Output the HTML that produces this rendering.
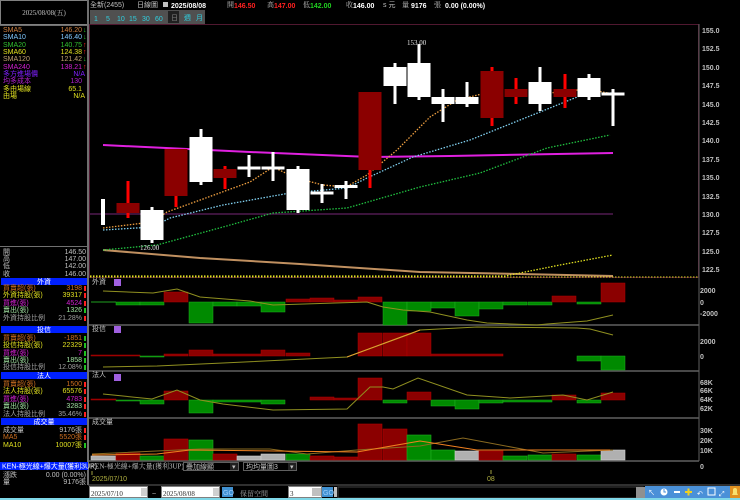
<!DOCTYPE html>
<html><head><meta charset="utf-8"><style>
html,body{margin:0;padding:0;background:#000;width:740px;height:500px;overflow:hidden}
svg{display:block}
text{font-family:"Liberation Sans","Noto Sans CJK TC",sans-serif;font-size:7px}
.s{font-family:"Liberation Serif","Noto Serif CJK SC",serif}
</style></head><body>
<svg width="740" height="500" viewBox="0 0 740 500" xmlns="http://www.w3.org/2000/svg">
<rect width="740" height="500" fill="#000"/>
<!-- left panel -->
<rect x="0.5" y="0.5" width="87" height="24" fill="none" stroke="#808080"/>
<line x1="88" y1="0" x2="88" y2="485" stroke="#707070" stroke-width="2"/>
<text x="44" y="15" fill="#c0c0c0" text-anchor="middle" class="s">2025/08/08(五)</text>
<line x1="0" y1="25.5" x2="88" y2="25.5" stroke="#707070"/>
<g class="s">
<text x="3" y="32" fill="#d08040">SMA5</text><text x="82" y="32" fill="#d08040" text-anchor="end">146.20</text><text x="83" y="32" fill="#20c020">↓</text>
<text x="3" y="39" fill="#80c8ff">SMA10</text><text x="82" y="39" fill="#80c8ff" text-anchor="end">146.40</text><text x="83" y="39" fill="#20c020">↓</text>
<text x="3" y="47" fill="#30c030">SMA20</text><text x="82" y="47" fill="#30c030" text-anchor="end">140.75</text><text x="83" y="47" fill="#ff2020">↑</text>
<text x="3" y="54" fill="#e0e020">SMA60</text><text x="82" y="54" fill="#e0e020" text-anchor="end">124.38</text><text x="83" y="54" fill="#ff2020">↑</text>
<text x="3" y="61" fill="#c0a070">SMA120</text><text x="82" y="61" fill="#c0a070" text-anchor="end">121.42</text><text x="83" y="61" fill="#20c020">↓</text>
<text x="3" y="69" fill="#d020d0">SMA240</text><text x="82" y="69" fill="#d020d0" text-anchor="end">138.21</text><text x="83" y="69" fill="#ff2020">↑</text>
<text x="3" y="76" fill="#8020ff">多方進場價</text><text x="85" y="76" fill="#8020ff" text-anchor="end">N/A</text>
<text x="3" y="83" fill="#b020d0">均多成本</text><text x="82" y="83" fill="#b020d0" text-anchor="end">130</text>
<text x="3" y="91" fill="#e0e020">多由場線</text><text x="82" y="91" fill="#e0e020" text-anchor="end">65.1</text>
<text x="3" y="98" fill="#e0e020">由場</text><text x="85" y="98" fill="#e0e020" text-anchor="end">N/A</text>

<line x1="0" y1="246.5" x2="88" y2="246.5" stroke="#707070"/>
<text x="3" y="254" fill="#c0c0c0">開</text><text x="86" y="254" fill="#c0c0c0" text-anchor="end">146.50</text>
<text x="3" y="261" fill="#c0c0c0">高</text><text x="86" y="261" fill="#c0c0c0" text-anchor="end">147.00</text>
<text x="3" y="268" fill="#c0c0c0">低</text><text x="86" y="268" fill="#c0c0c0" text-anchor="end">142.00</text>
<text x="3" y="276" fill="#c0c0c0">收</text><text x="86" y="276" fill="#c0c0c0" text-anchor="end">146.00</text>

<rect x="1" y="278" width="86" height="7" fill="#0020ff"/><text x="44" y="284" fill="#fff" text-anchor="middle">外資</text>
<text x="3" y="290" fill="#d07020">買賣超(張)</text><text x="82" y="290" fill="#d07020" text-anchor="end">3198</text><rect x="84" y="286" width="2" height="5" fill="#ff2020"/>
<text x="3" y="297" fill="#e0e020">外資持股(張)</text><text x="82" y="297" fill="#e0e020" text-anchor="end">39317</text><rect x="84" y="293" width="2" height="5" fill="#ff2020"/>
<text x="3" y="305" fill="#d020d0">買進(張)</text><text x="82" y="305" fill="#d020d0" text-anchor="end">4524</text><rect x="84" y="301" width="2" height="5" fill="#ff2020"/>
<text x="3" y="312" fill="#a0e0a0">賣出(張)</text><text x="82" y="312" fill="#a0e0a0" text-anchor="end">1326</text><rect x="84" y="308" width="2" height="5" fill="#20c020"/>
<text x="3" y="320" fill="#a0a0a0">外資持股比例</text><text x="82" y="320" fill="#a0a0a0" text-anchor="end">21.28%</text><rect x="84" y="316" width="2" height="5" fill="#ff2020"/>

<rect x="1" y="326" width="86" height="7" fill="#0020ff"/><text x="44" y="332" fill="#fff" text-anchor="middle">投信</text>
<text x="3" y="340" fill="#d07020">買賣超(張)</text><text x="82" y="340" fill="#d07020" text-anchor="end">-1851</text><rect x="84" y="336" width="2" height="5" fill="#20c020"/>
<text x="3" y="347" fill="#e0e020">投信持股(張)</text><text x="82" y="347" fill="#e0e020" text-anchor="end">22329</text><rect x="84" y="343" width="2" height="5" fill="#20c020"/>
<text x="3" y="355" fill="#d020d0">買進(張)</text><text x="82" y="355" fill="#d020d0" text-anchor="end">7</text><rect x="84" y="351" width="2" height="5" fill="#20c020"/>
<text x="3" y="362" fill="#a0e0a0">賣出(張)</text><text x="82" y="362" fill="#a0e0a0" text-anchor="end">1858</text><rect x="84" y="358" width="2" height="5" fill="#20c020"/>
<text x="3" y="369" fill="#a0a0a0">投信持股比例</text><text x="82" y="369" fill="#a0a0a0" text-anchor="end">12.08%</text><rect x="84" y="365" width="2" height="5" fill="#20c020"/>

<rect x="1" y="372" width="86" height="7" fill="#0020ff"/><text x="44" y="378" fill="#fff" text-anchor="middle">法人</text>
<text x="3" y="386" fill="#d07020">買賣超(張)</text><text x="82" y="386" fill="#d07020" text-anchor="end">1500</text><rect x="84" y="382" width="2" height="5" fill="#ff2020"/>
<text x="3" y="393" fill="#e0e020">法人持股(張)</text><text x="82" y="393" fill="#e0e020" text-anchor="end">65576</text><rect x="84" y="389" width="2" height="5" fill="#ff2020"/>
<text x="3" y="401" fill="#d020d0">買進(張)</text><text x="82" y="401" fill="#d020d0" text-anchor="end">4783</text><rect x="84" y="397" width="2" height="5" fill="#ff2020"/>
<text x="3" y="408" fill="#a0e0a0">賣出(張)</text><text x="82" y="408" fill="#a0e0a0" text-anchor="end">3283</text><rect x="84" y="404" width="2" height="5" fill="#ff2020"/>
<text x="3" y="416" fill="#a0a0a0">法人持股比例</text><text x="82" y="416" fill="#a0a0a0" text-anchor="end">35.46%</text><rect x="84" y="412" width="2" height="5" fill="#ff2020"/>

<rect x="1" y="418" width="86" height="7" fill="#0020ff"/><text x="44" y="424" fill="#fff" text-anchor="middle">成交量</text>
<text x="3" y="432" fill="#c0c0c0">成交量</text><text x="82" y="432" fill="#c0c0c0" text-anchor="end">9176張</text><rect x="84" y="428" width="2" height="5" fill="#ff2020"/>
<text x="3" y="439" fill="#d07020">MA5</text><text x="82" y="439" fill="#d07020" text-anchor="end">5520張</text><rect x="84" y="435" width="2" height="5" fill="#ff2020"/>
<text x="3" y="447" fill="#e0e020">MA10</text><text x="82" y="447" fill="#e0e020" text-anchor="end">10007張</text><rect x="84" y="443" width="2" height="5" fill="#20c020"/>

<rect x="0" y="462" width="88" height="8" fill="#0020ff"/><text x="2" y="468.5" fill="#fff" font-size="6.5">KEN-極光線+爆大量(獲利3UP)</text>
<text x="3" y="477" fill="#c0c0c0">漲跌</text><text x="86" y="477" fill="#c0c0c0" text-anchor="end">0.00 (0.00%)</text>
<text x="3" y="484" fill="#c0c0c0">量</text><text x="86" y="484" fill="#c0c0c0" text-anchor="end">9176張</text>
</g>

<!-- top header -->
<g class="s">
<text x="90" y="7" fill="#c0c0c0">全新(2455)</text>
<text x="137" y="7" fill="#c0c0c0">日線圖</text>
<rect x="163" y="2" width="5" height="5" fill="#c0c0c0"/>
</g>
<text x="171" y="8" fill="#fff" font-weight="bold" font-size="9">2025/08/08</text>
<text x="227" y="7" fill="#c0c0c0" class="s">開</text><text x="234" y="8" fill="#ff2020" font-weight="bold" font-size="8.5">146.50</text>
<text x="267" y="7" fill="#c0c0c0" class="s">高</text><text x="274" y="8" fill="#ff2020" font-weight="bold" font-size="8.5">147.00</text>
<text x="303" y="7" fill="#c0c0c0" class="s">低</text><text x="310" y="8" fill="#20d020" font-weight="bold" font-size="8.5">142.00</text>
<text x="346" y="7" fill="#c0c0c0" class="s">收</text><text x="353" y="8" fill="#fff" font-weight="bold" font-size="8.5">146.00</text>
<text x="383" y="7" fill="#c0c0c0">s 元</text>
<text x="402" y="7" fill="#c0c0c0" class="s">量</text><text x="411" y="8" fill="#fff" font-weight="bold" font-size="8.5">9176</text>
<text x="434" y="7" fill="#c0c0c0" class="s">張</text><text x="445" y="8" fill="#fff" font-weight="bold" font-size="8.5">0.00 (0.00%)</text>
<!-- buttons -->
<rect x="90" y="10" width="115" height="14" fill="#505050"/>
<g fill="#30d0e0" font-size="8.5">
<text x="94" y="21">1</text><text x="106" y="21">5</text><text x="117" y="21">10</text><text x="129" y="21">15</text><text x="142" y="21">30</text><text x="155" y="21">60</text>
</g>
<rect x="168" y="11" width="11" height="12" fill="#202020"/>
<text x="171" y="20" fill="#808080" font-size="6">日</text>
<text x="184" y="20" fill="#30d0e0" font-size="6">週</text><text x="196" y="20" fill="#30d0e0" font-size="6">月</text>

<!-- main chart frame -->
<rect x="89.5" y="24.5" width="609" height="253" fill="none" stroke="#501830"/>
<!-- axis labels -->
<g fill="#c0c0c0" font-size="7.5" font-weight="bold">
<text x="702" y="33">155.0</text><text x="702" y="51">152.5</text><text x="702" y="70">150.0</text><text x="702" y="88">147.5</text><text x="702" y="107">145.0</text><text x="702" y="125">142.5</text><text x="702" y="143">140.0</text><text x="702" y="162">137.5</text><text x="702" y="180">135.0</text><text x="702" y="199">132.5</text><text x="702" y="217">130.0</text><text x="702" y="235">127.5</text><text x="702" y="254">125.0</text><text x="702" y="272">122.5</text>
</g>
<!-- horizontal purple -->
<line x1="90" y1="214" x2="613" y2="214" stroke="#602060" stroke-width="1.2"/>
<!-- MA120 tan -->
<polyline points="103,250 200,258 300,264 420,272 520,274 613,276" fill="none" stroke="#c09060" stroke-width="2"/>
<!-- MA60 yellow dotted -->
<polyline points="90,276 505,276 560,265 613,255" fill="none" stroke="#e0e020" stroke-width="1.3" stroke-dasharray="1.5,1.5"/>
<line x1="90" y1="277" x2="699" y2="277" stroke="#e0e020" stroke-dasharray="1.5,1.5"/>
<!-- magenta -->
<polyline points="103,145 250,152 370,157 450,156 613,153" fill="none" stroke="#e020e0" stroke-width="2"/>
<!-- MA20 green dotted -->
<polyline points="103,250 157,245 223,227 273,213 347,208 420,187 480,173 547,148 610,135" fill="none" stroke="#20c040" stroke-width="1.3" stroke-dasharray="1.5,1.5"/>
<!-- MA10 cyan dotted -->
<polyline points="103,230 153,227 170,218 223,205 290,193 347,188 367,178 413,157 470,140 540,112 587,93 613,93" fill="none" stroke="#80d0f0" stroke-width="1.3" stroke-dasharray="1.5,1.5"/>
<!-- MA5 orange dotted -->
<polyline points="103,228 152,222 167,212 250,182 273,167 296,178 323,185 346,187 367,175 397,150 430,117 457,100 490,92 540,94 587,89 613,94" fill="none" stroke="#f0a040" stroke-width="1.3" stroke-dasharray="1.5,1.5"/>

<!-- candles -->
<g>
<rect x="101" y="199" width="4" height="26" fill="#fff"/>
<rect x="126.5" y="181" width="3" height="37" fill="#ff0000"/><rect x="116.5" y="203" width="23" height="10" fill="#8b0000"/>
<rect x="150.5" y="207" width="3" height="36" fill="#fff"/><rect x="140.5" y="210" width="23" height="30" fill="#fff"/>
<rect x="174.5" y="149" width="3" height="58" fill="#ff0000"/><rect x="164.5" y="149" width="23" height="47" fill="#8b0000"/>
<rect x="199.5" y="129" width="3" height="56" fill="#fff"/><rect x="189.5" y="137" width="23" height="45" fill="#fff"/>
<rect x="223.5" y="166" width="3" height="23" fill="#ff0000"/><rect x="213.5" y="169" width="23" height="9" fill="#8b0000"/>
<rect x="247.5" y="155" width="3" height="22" fill="#fff"/><rect x="237.5" y="166.5" width="23" height="3" fill="#fff"/>
<rect x="271.5" y="152" width="3" height="29" fill="#fff"/><rect x="261.5" y="166.5" width="23" height="3" fill="#fff"/>
<rect x="296.5" y="166" width="3" height="47" fill="#fff"/><rect x="286.5" y="169" width="23" height="41" fill="#fff"/>
<rect x="320.5" y="184" width="3" height="19" fill="#fff"/><rect x="310.5" y="191.5" width="23" height="3" fill="#fff"/>
<rect x="344.5" y="181" width="3" height="18" fill="#fff"/><rect x="334.5" y="185" width="23" height="3" fill="#fff"/>
<rect x="368.5" y="92" width="3" height="96" fill="#ff0000"/><rect x="358.5" y="92" width="23" height="78" fill="#8b0000"/>
<rect x="393.5" y="63" width="3" height="41" fill="#fff"/><rect x="383.5" y="67" width="23" height="19" fill="#fff"/>
<rect x="417.5" y="44" width="3" height="56" fill="#fff"/><rect x="407.5" y="63" width="23" height="34" fill="#fff"/>
<rect x="441.5" y="89" width="3" height="33" fill="#fff"/><rect x="431.5" y="97" width="23" height="7" fill="#fff"/>
<rect x="465.5" y="82" width="3" height="25" fill="#fff"/><rect x="455.5" y="97" width="23" height="7" fill="#fff"/>
<rect x="490.5" y="67" width="3" height="59" fill="#ff0000"/><rect x="480.5" y="71" width="23" height="47" fill="#8b0000"/>
<rect x="514.5" y="78" width="3" height="26" fill="#ff0000"/><rect x="504.5" y="89" width="23" height="8" fill="#8b0000"/>
<rect x="538.5" y="67" width="3" height="44" fill="#fff"/><rect x="528.5" y="82" width="23" height="22" fill="#fff"/>
<rect x="563.5" y="74" width="3" height="34" fill="#ff0000"/><rect x="553.5" y="89" width="23" height="8" fill="#8b0000"/>
<rect x="587.5" y="74" width="3" height="26" fill="#fff"/><rect x="577.5" y="78" width="23" height="19" fill="#fff"/>
<rect x="611.5" y="89" width="3" height="37" fill="#fff"/><rect x="601.5" y="92.5" width="23" height="3" fill="#fff"/>
</g>
<text x="140" y="250" fill="#e0e0e0" class="s">126.00</text>
<text x="407" y="45" fill="#e0e0e0" class="s">153.00</text>

<!-- panel separators -->
<g stroke="#606060" stroke-width="1.5">
<line x1="89" y1="325" x2="699" y2="325"/><line x1="89" y1="371" x2="699" y2="371"/><line x1="89" y1="418" x2="699" y2="418"/><line x1="89" y1="461" x2="699" y2="461"/>
</g>
<line x1="699" y1="24" x2="699" y2="461" stroke="#606060"/>
<!-- panel titles -->
<g class="s" fill="#c0c0c0">
<text x="92" y="284">外資</text><text x="92" y="331">投信</text><text x="92" y="377">法人</text><text x="92" y="424">成交量</text>
</g>
<g fill="#a060e0"><rect x="114" y="279" width="7" height="7"/><rect x="114" y="326" width="7" height="7"/><rect x="114" y="374" width="7" height="7"/></g>
<g fill="#c0c0c0" font-size="7.5" font-weight="bold">
<text x="700" y="293">2000</text><text x="700" y="305">0</text><text x="700" y="316">-2000</text>
<text x="700" y="344">2000</text><text x="700" y="359">0</text>
<text x="700" y="385">68K</text><text x="700" y="393">66K</text><text x="700" y="402">64K</text><text x="700" y="411">62K</text>
<text x="700" y="433">30K</text><text x="700" y="443">20K</text><text x="700" y="453">10K</text><text x="700" y="469">0</text>
</g>

<!-- 外資 bars -->
<g fill="#008a00" stroke="#20b020" stroke-width="0.5">
<rect x="116" y="302" width="24" height="3"/><rect x="140" y="302" width="24" height="3"/>
<rect x="189" y="302" width="24" height="21"/><rect x="213" y="302" width="24" height="4"/><rect x="237" y="302" width="24" height="4"/><rect x="261" y="302" width="24" height="10"/>
<rect x="383" y="302" width="24" height="23"/><rect x="407" y="302" width="24" height="9"/><rect x="431" y="302" width="24" height="6"/><rect x="455" y="302" width="24" height="14"/><rect x="479" y="302" width="24" height="7"/><rect x="503" y="302" width="24" height="3"/><rect x="528" y="302" width="24" height="3"/><rect x="577" y="302" width="24" height="2"/>
</g>
<line x1="91" y1="302" x2="116" y2="302" stroke="#20a020"/>
<g fill="#8b0000" stroke="#b00000" stroke-width="0.5">
<rect x="164" y="292" width="24" height="10"/><rect x="286" y="299" width="24" height="3"/><rect x="310" y="298" width="24" height="4"/><rect x="334" y="300" width="24" height="2"/><rect x="358" y="297" width="24" height="5"/><rect x="552" y="296" width="24" height="6"/><rect x="601" y="283" width="24" height="19"/>
</g>
<polyline points="103,291 153,293 177,289 200,297 250,301 273,305 367,302 383,307 403,310 430,312 467,320 487,323 537,325 547,324 587,321 613,315" fill="none" stroke="#909020" stroke-width="1"/>

<!-- 投信 bars -->
<g fill="#8b0000" stroke="#b00000" stroke-width="0.5">
<rect x="91" y="355" width="49" height="1"/><rect x="164" y="354" width="24" height="2"/><rect x="189" y="350" width="24" height="6"/><rect x="213" y="354" width="48" height="2"/><rect x="261" y="350" width="24" height="6"/><rect x="286" y="353" width="24" height="3"/>
<rect x="358" y="333" width="24" height="23"/><rect x="383" y="333" width="24" height="23"/><rect x="407" y="333" width="24" height="23"/><rect x="431" y="354" width="72" height="2"/>
</g>
<g fill="#008a00" stroke="#20b020" stroke-width="0.5"><rect x="140" y="356" width="24" height="1"/><rect x="577" y="356" width="24" height="5"/><rect x="601" y="356" width="24" height="14"/></g>
<polyline points="103,367 157,366 223,363 347,357 410,334 420,330 477,327 577,328 590,329 613,335" fill="none" stroke="#909020" stroke-width="1"/>
<polyline points="347,357 420,330" fill="none" stroke="#e0a030" stroke-width="1"/>

<!-- 法人 bars -->
<g fill="#008a00" stroke="#20b020" stroke-width="0.5">
<rect x="116" y="400" width="24" height="1"/><rect x="140" y="400" width="24" height="4"/><rect x="189" y="400" width="24" height="13"/><rect x="213" y="400" width="48" height="2"/><rect x="261" y="400" width="24" height="4"/>
<rect x="383" y="400" width="24" height="3"/><rect x="431" y="400" width="24" height="6"/><rect x="455" y="400" width="24" height="9"/><rect x="479" y="400" width="24" height="3"/><rect x="503" y="400" width="49" height="2"/><rect x="577" y="400" width="24" height="3"/>
</g>
<g fill="#8b0000" stroke="#b00000" stroke-width="0.5">
<rect x="91" y="399" width="25" height="1"/><rect x="164" y="391" width="24" height="9"/><rect x="310" y="397" width="24" height="3"/><rect x="334" y="398" width="24" height="2"/><rect x="358" y="378" width="24" height="22"/><rect x="407" y="392" width="24" height="8"/><rect x="552" y="395" width="24" height="5"/><rect x="601" y="393" width="24" height="7"/>
</g>
<polyline points="103,394 152,399 177,390 200,400 223,404 273,410 347,409 370,387 383,387 393,389 418,378 467,395 510,398 563,395 587,400 613,392" fill="none" stroke="#909020" stroke-width="1"/>

<!-- volume bars -->
<g stroke-width="0.6">
<rect x="91" y="456" width="25" height="4" fill="#b0b0b0" stroke="#d0d0d0"/>
<rect x="116" y="453" width="24" height="7" fill="#8b0000" stroke="#b00000"/>
<rect x="140" y="456" width="24" height="4" fill="#008a00" stroke="#20b020"/>
<rect x="164" y="439" width="24" height="21" fill="#8b0000" stroke="#b00000"/>
<rect x="189" y="440" width="24" height="20" fill="#008a00" stroke="#20b020"/>
<rect x="213" y="454" width="24" height="6" fill="#8b0000" stroke="#b00000"/>
<rect x="237" y="456" width="24" height="4" fill="#b0b0b0" stroke="#d0d0d0"/>
<rect x="261" y="454" width="24" height="6" fill="#b0b0b0" stroke="#d0d0d0"/>
<rect x="286" y="454" width="24" height="6" fill="#008a00" stroke="#20b020"/>
<rect x="310" y="456" width="24" height="4" fill="#8b0000" stroke="#b00000"/>
<rect x="334" y="457" width="24" height="3" fill="#8b0000" stroke="#b00000"/>
<rect x="358" y="424" width="24" height="36" fill="#8b0000" stroke="#b00000"/>
<rect x="383" y="429" width="24" height="31" fill="#8b0000" stroke="#b00000"/>
<rect x="407" y="435" width="24" height="25" fill="#008a00" stroke="#20b020"/>
<rect x="431" y="450" width="24" height="10" fill="#008a00" stroke="#20b020"/>
<rect x="455" y="451" width="24" height="9" fill="#b0b0b0" stroke="#d0d0d0"/>
<rect x="479" y="451" width="24" height="9" fill="#8b0000" stroke="#b00000"/>
<rect x="503" y="456" width="24" height="4" fill="#008a00" stroke="#20b020"/>
<rect x="528" y="455" width="24" height="5" fill="#008a00" stroke="#20b020"/>
<rect x="552" y="454" width="24" height="6" fill="#8b0000" stroke="#b00000"/>
<rect x="577" y="455" width="24" height="5" fill="#008a00" stroke="#20b020"/>
<rect x="601" y="450" width="24" height="10" fill="#b0b0b0" stroke="#d0d0d0"/>
</g>
<polyline points="92,454 200,449 270,449 307,454 357,450 420,446 463,438 543,453 613,450" fill="none" stroke="#8a6a20" stroke-width="1"/>
<polyline points="92,455 157,454 190,450 357,452 420,441 477,450 610,450" fill="none" stroke="#f08020" stroke-width="1"/>

<!-- KEN row -->
<text x="90" y="468.5" fill="#c0c0c0" font-size="6.5" class="s">KEN-極光線+爆大量(獲利3UP)</text>
<rect x="183.5" y="462.5" width="55" height="8" fill="#000" stroke="#606060"/><text x="186" y="469" fill="#c0c0c0" font-size="6">疊加線顯</text><rect x="230" y="463" width="8" height="7" fill="#202020"/><text x="232" y="469" fill="#c0c0c0" font-size="5">▾</text>
<rect x="243.5" y="462.5" width="53" height="8" fill="#000" stroke="#606060"/><text x="246" y="469" fill="#c0c0c0" font-size="6">均均量圖3</text><rect x="288" y="463" width="8" height="7" fill="#202020"/><text x="290" y="469" fill="#c0c0c0" font-size="5">▾</text>
<line x1="92" y1="471" x2="92" y2="475" stroke="#a0a040"/>
<text x="92" y="481" fill="#b0b040" font-size="7">2025/07/10</text>
<line x1="491" y1="470" x2="491" y2="474" stroke="#a0a040"/>
<text x="487" y="481" fill="#b0b040" font-size="6">08</text>
<line x1="88" y1="485" x2="740" y2="485" stroke="#606060"/>

<!-- controls -->
<rect x="89" y="486" width="651" height="12" fill="#000"/>
<rect x="89.5" y="486.5" width="58" height="11" fill="#fff" stroke="#808080"/>
<text x="91" y="496" fill="#303030" font-size="9" class="s">2025/07/10</text>
<rect x="141" y="488" width="6" height="8" fill="#d0d0d0"/>
<text x="152" y="496" fill="#c0c0c0" font-size="8">~</text>
<rect x="161.5" y="486.5" width="58" height="11" fill="#fff" stroke="#808080"/>
<text x="163" y="496" fill="#303030" font-size="9" class="s">2025/08/08</text>
<rect x="213" y="488" width="6" height="8" fill="#d0d0d0"/>
<rect x="222" y="487" width="11" height="10" fill="#4090d0"/><text x="223" y="495" fill="#a0d0ff" font-size="6">GO</text>
<text x="240" y="496" fill="#a0a0a0" font-size="10.5" class="s">保留空間</text>
<rect x="288.5" y="486.5" width="33" height="11" fill="#fff" stroke="#808080"/>
<text x="290" y="496" fill="#303030" font-size="9" class="s">3</text>
<rect x="312" y="488" width="9" height="8" fill="#c0c0c0"/>
<rect x="322" y="487" width="11" height="10" fill="#4090d0"/><text x="323" y="495" fill="#a0d0ff" font-size="6">GO</text>
<rect x="334" y="487" width="3" height="10" fill="#c0c0c0"/>
<rect x="338" y="487" width="305" height="11" fill="#000" stroke="#404040"/>
<rect x="636" y="487" width="9" height="11" fill="#909090"/>
<g>
<rect x="645" y="486" width="95" height="12" fill="#4a90d8"/>
<text x="648" y="495" fill="#fff" font-size="8">↖</text>
<circle cx="664" cy="492" r="3.5" fill="#fff"/><path d="M664 489v3h2" stroke="#4a90d8" fill="none"/>
<rect x="674" y="491" width="6" height="2" fill="#fff"/>
<rect x="685" y="491" width="7" height="2" fill="#f0d020"/><rect x="687.5" y="488.5" width="2" height="7" fill="#f0d020"/>
<text x="697" y="496" fill="#fff" font-size="8">↶</text>
<rect x="708" y="488" width="7" height="7" fill="none" stroke="#fff"/>
<text x="719" y="496" fill="#fff" font-size="8">⤢</text>
<rect x="730" y="486" width="10" height="12" fill="#e09020"/><path d="M732 495h6l-1-2v-3a2 2 0 0 0-4 0v3z" fill="#f8e070"/>
</g>
<rect x="0" y="498" width="740" height="2" fill="#80d8e8"/>
</svg>
</body></html>
